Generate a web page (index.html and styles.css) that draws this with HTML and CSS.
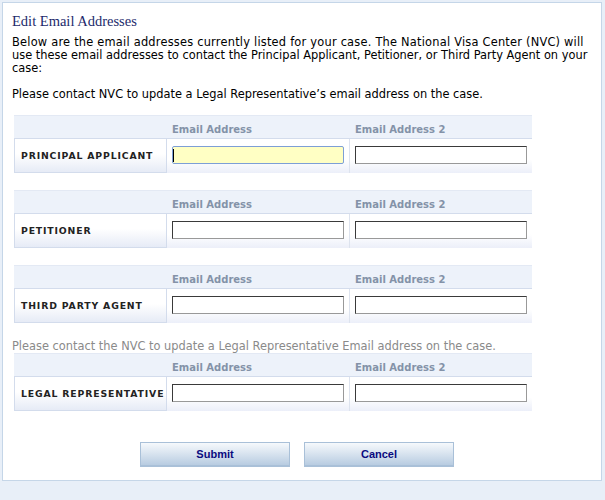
FILE: index.html
```html
<!DOCTYPE html>
<html>
<head>
<meta charset="utf-8">
<link rel="stylesheet" href="styles.css">
</head>
<body>
<div class="panel">
  <h1 class="title">Edit Email Addresses</h1>
  <p class="intro"><span class="first">Below are the email addresses currently listed for your case. The National Visa Center (NVC) will</span><br>use these email addresses to contact the Principal Applicant, Petitioner, or Third Party Agent on your case:</p>
  <p class="intro gap">Please contact NVC to update a Legal Representative’s email address on the case.</p>

  <div class="block">
    <div class="hcell"></div><div class="hcell c1">Email Address</div><div class="hcell c2">Email Address 2</div>
    <div class="lab">PRINCIPAL APPLICANT</div><div class="cell c1"><input class="field focus" type="text"></div><div class="cell c2"><input class="field" type="text"></div>
  </div>

  <div class="block">
    <div class="hcell"></div><div class="hcell c1">Email Address</div><div class="hcell c2">Email Address 2</div>
    <div class="lab">PETITIONER</div><div class="cell c1"><input class="field" type="text"></div><div class="cell c2"><input class="field" type="text"></div>
  </div>

  <div class="block">
    <div class="hcell"></div><div class="hcell c1">Email Address</div><div class="hcell c2">Email Address 2</div>
    <div class="lab">THIRD PARTY AGENT</div><div class="cell c1"><input class="field" type="text"></div><div class="cell c2"><input class="field" type="text"></div>
  </div>

  <p class="note">Please contact the NVC to update a Legal Representative Email address on the case.</p>
  <div class="block last">
    <div class="hcell"></div><div class="hcell c1">Email Address</div><div class="hcell c2">Email Address 2</div>
    <div class="lab">LEGAL REPRESENTATIVE</div><div class="cell c1"><input class="field" type="text"></div><div class="cell c2"><input class="field" type="text"></div>
  </div>

  <div class="buttons">
    <button class="btn" type="button">Submit</button>
    <button class="btn" type="button">Cancel</button>
  </div>
</div>
</body>
</html>
```
FILE: styles.css
```css
html, body {
  margin: 0;
  padding: 0;
  background: #e8eff8;
}
body {
  padding: 2px 0 0 2px;
  height: 500px;
  box-sizing: border-box;
}
.panel {
  width: 600px;
  height: 479px;
  box-sizing: border-box;
  border: 1px solid #c5d6e8;
  background: #fff;
  padding: 0 9px;
  font-family: "DejaVu Sans", Verdana, sans-serif;
}
.title {
  margin: 0;
  padding-top: 9px;
  font-family: "Liberation Serif", "Times New Roman", serif;
  font-weight: normal;
  font-size: 14.5px;
  line-height: 18px;
  color: #1c2a6b;
}
.intro {
  margin: 6px 0 0;
  font-size: 11.4px;
  line-height: 13px;
  color: #000;
}
.intro .first {
  letter-spacing: 0.22px;
}
.intro.gap {
  margin: 13px 0 14px;
}
.block {
  display: grid;
  grid-template-columns: 153px 182px 183px;
  width: 518px;
  margin: 0 0 17px 2px;
}
.hcell {
  height: 24px;
  box-sizing: border-box;
  background: #edf2fa;
  border-top: 1px solid #e3e9f4;
  border-bottom: 1px solid #d3dcec;
  display: flex;
  align-items: flex-end;
  padding: 0 0 2px 5px;
  font-size: 10px;
  line-height: 12px;
  font-weight: bold;
  color: #8492a8;
}
.hcell.c2 { padding-left: 6px; }
.lab {
  height: 34px;
  box-sizing: border-box;
  border: 1px solid #d3dcec;
  border-top: none;
  display: flex;
  align-items: center;
  padding: 0 0 1px 6px;
  font-size: 9.3px;
  font-weight: bold;
  letter-spacing: 0.85px;
  color: #222;
  background: linear-gradient(#fff 0, #fff 45%, #e6ebf6 100%);
  white-space: nowrap;
  overflow: hidden;
}
.cell {
  height: 34px;
  box-sizing: border-box;
  padding: 7px 0 0 5px;
  background: linear-gradient(#fff 0, #fff 60%, #eceff9 100%);
}
.cell.c2 { border-left: 1px solid #dde3ee; }
.field {
  display: block;
  width: 172px;
  height: 18px;
  box-sizing: border-box;
  margin: 0;
  padding: 0 2px;
  border: 1px solid;
  border-color: #3a3a3a #999 #999 #3a3a3a;
  background: #fff;
  font-size: 11px;
  outline: none;
}
.field.focus {
  background: linear-gradient(#000, #000) no-repeat 0 2px / 1px 13px, #ffffc4;
  border: 1px solid #7d9fd6;
  border-radius: 2px;
}
.note {
  margin: 0;
  font-size: 11.4px;
  line-height: 13px;
  color: #8a8a8a;
}
.block.last { margin-bottom: 31px; }
.buttons {
  display: flex;
  gap: 14px;
  padding-left: 128px;
}
.btn {
  width: 150px;
  height: 25px;
  box-sizing: border-box;
  margin: 0;
  border: 1px solid #a9c0d8;
  border-bottom: 2px solid #a9c0d8;
  background: linear-gradient(#f6f9fc, #b8cce1);
  font-family: "Liberation Sans", Arial, sans-serif;
  font-weight: bold;
  font-size: 11px;
  color: #0a0a80;
  padding: 0;
}
```
